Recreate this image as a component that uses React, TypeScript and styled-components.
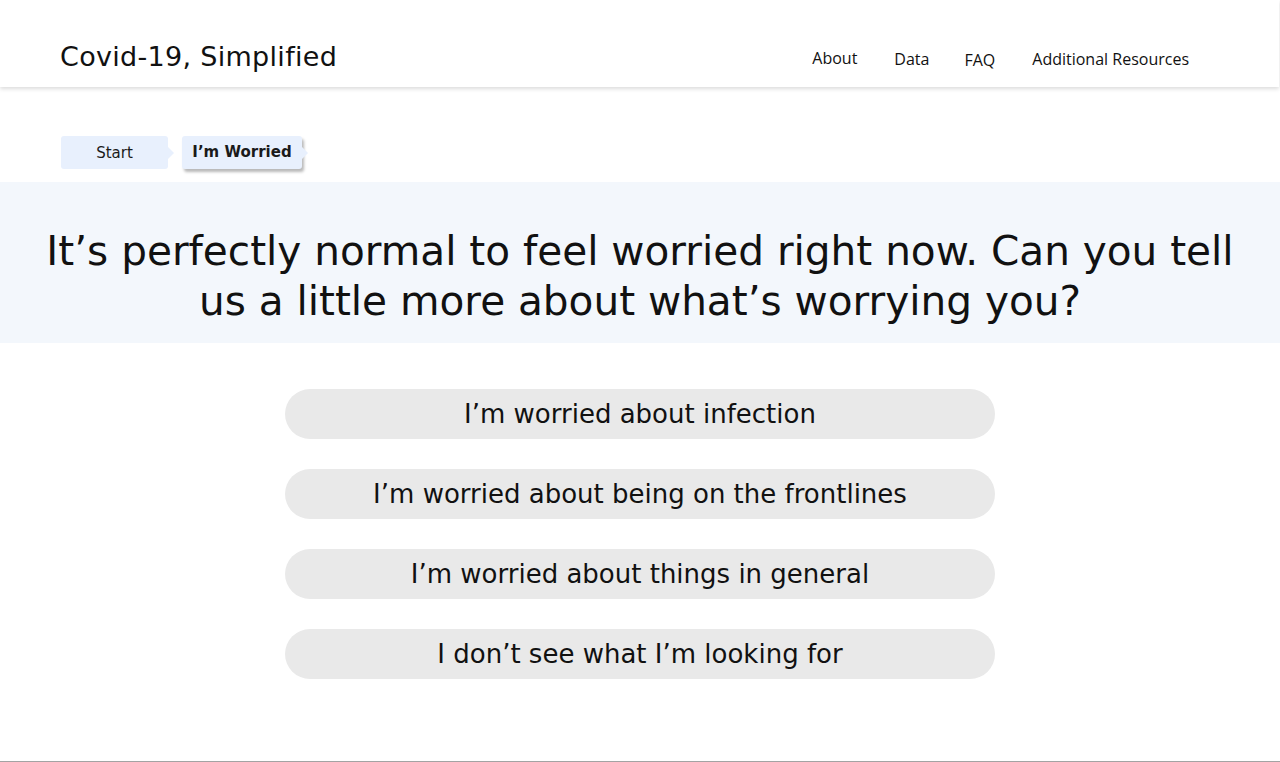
import React from "react";
import styled, { createGlobalStyle } from "styled-components";

const GlobalStyle = createGlobalStyle`
  html, body { margin: 0; padding: 0; background: #ffffff; }
  body { font-family: "DejaVu Sans", sans-serif; color: #111; }
  * { box-sizing: border-box; }
`;

const Page = styled.div`
  height: 762px;
  border-bottom: 1px solid #a3a3a3;
  overflow: hidden;
  display: flex;
  flex-direction: column;
`;

const Header = styled.header`
  height: 87px;
  width: 1279px;
  background: #fff;
  box-shadow: 0 2px 4px rgba(0, 0, 0, 0.14);
  display: flex;
  align-items: flex-end;
  justify-content: space-between;
  padding: 0 90px 16px 60px;
  position: relative;
  z-index: 1;
`;

const Brand = styled.div`
  font-family: "DejaVu Sans", sans-serif;
  font-size: 27px;
  letter-spacing: 0.3px;
  color: #111;
  line-height: 1;
  position: relative;
  top: -1px;
`;

const Nav = styled.nav`
  display: flex;
  align-items: flex-end;
`;

const NavLink = styled.a<{ $ml: number; $dy: number }>`
  font-family: "Open Sans", sans-serif;
  font-size: 16px;
  color: #111;
  text-decoration: none;
  margin-left: ${(p) => p.$ml}px;
  position: relative;
  top: ${(p) => p.$dy}px;
`;

const Crumbs = styled.div`
  display: flex;
  gap: 14px;
  padding: 49px 0 0 61px;
`;

const Crumb = styled.div<{ $active?: boolean; $w: number }>`
  position: relative;
  width: ${(p) => p.$w}px;
  height: 33px;
  background: #e8f0fd;
  border-radius: 3px;
  display: flex;
  align-items: center;
  justify-content: center;
  font-family: "DejaVu Sans", sans-serif;
  font-size: 15px;
  font-weight: ${(p) => (p.$active ? 700 : 400)};
  color: #1a1a1a;
  box-shadow: ${(p) => (p.$active ? "2px 3px 3px rgba(0,0,0,0.28)" : "none")};
  padding-bottom: ${(p) => (p.$active ? "1px" : "0")};

  &::after {
    content: "";
    position: absolute;
    right: -6px;
    top: 50%;
    margin-top: -6px;
    border-top: 6px solid transparent;
    border-bottom: 6px solid transparent;
    border-left: 6px solid #e8f0fd;
  }
`;

const Hero = styled.section`
  margin-top: 13px;
  height: 161px;
  background: #f3f7fc;
  display: flex;
  align-items: center;
  justify-content: center;
`;

const Heading = styled.h1`
  margin: 0;
  font-family: "DejaVu Sans", sans-serif;
  font-weight: 400;
  font-size: 40.6px;
  line-height: 50px;
  text-align: center;
  color: #111;
  max-width: 1260px;
  padding-top: 26px;
`;

const Options = styled.div`
  margin-top: 46px;
  display: flex;
  flex-direction: column;
  align-items: center;
  gap: 30px;
`;

const Option = styled.button`
  width: 710px;
  height: 50px;
  border: none;
  border-radius: 25px;
  background: #e9e9e9;
  font-family: "DejaVu Sans", sans-serif;
  font-size: 26px;
  color: #111;
  cursor: pointer;
  padding: 0;
`;

const options = [
  "I’m worried about infection",
  "I’m worried about being on the frontlines",
  "I’m worried about things in general",
  "I don’t see what I’m looking for",
];

export default function App() {
  return (
    <>
      <GlobalStyle />
      <Page>
        <Header>
          <Brand>Covid-19, Simplified</Brand>
          <Nav>
            <NavLink $ml={0} $dy={-2}>About</NavLink>
            <NavLink $ml={37} $dy={-1}>Data</NavLink>
            <NavLink $ml={35} $dy={0}>FAQ</NavLink>
            <NavLink $ml={37} $dy={-1}>Additional Resources</NavLink>
          </Nav>
        </Header>
        <Crumbs>
          <Crumb $w={107}>Start</Crumb>
          <Crumb $w={120} $active>I’m Worried</Crumb>
        </Crumbs>
        <Hero>
          <Heading>
            It’s perfectly normal to feel worried right now. Can you tell
            <br />
            us a little more about what’s worrying you?
          </Heading>
        </Hero>
        <Options>
          {options.map((o) => (
            <Option key={o}>{o}</Option>
          ))}
        </Options>
      </Page>
    </>
  );
}
